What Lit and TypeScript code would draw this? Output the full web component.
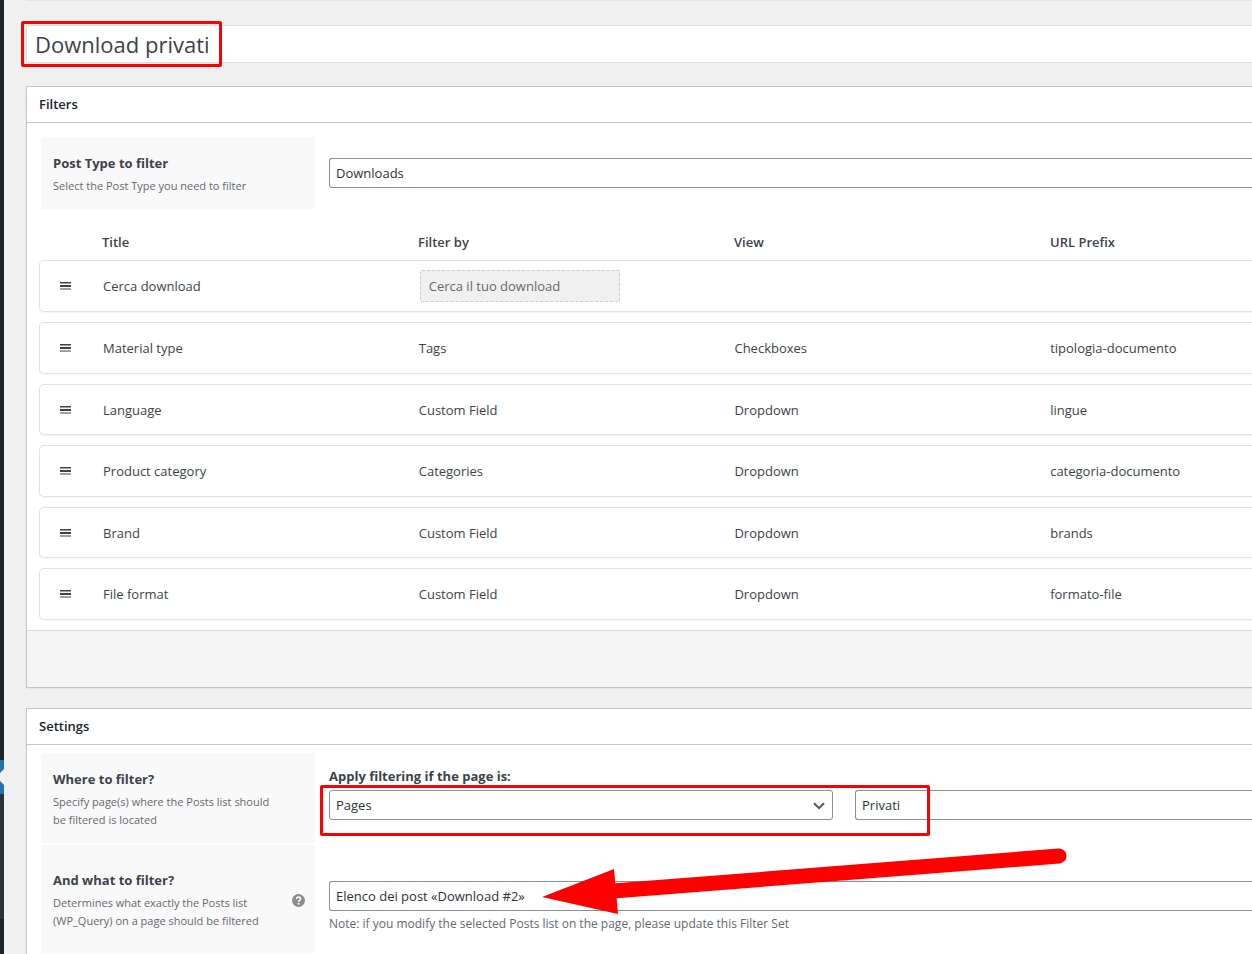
import { LitElement, html, svg, css, nothing } from "lit";
import { customElement, property } from "lit/decorators.js";

interface FilterRow {
  title: string;
  by: string;
  view: string;
  prefix: string;
  search?: boolean;
}

const FILTERS: FilterRow[] = [
  { title: "Cerca download", by: "Cerca il tuo download", view: "", prefix: "", search: true },
  { title: "Material type", by: "Tags", view: "Checkboxes", prefix: "tipologia-documento" },
  { title: "Language", by: "Custom Field", view: "Dropdown", prefix: "lingue" },
  { title: "Product category", by: "Categories", view: "Dropdown", prefix: "categoria-documento" },
  { title: "Brand", by: "Custom Field", view: "Dropdown", prefix: "brands" },
  { title: "File format", by: "Custom Field", view: "Dropdown", prefix: "formato-file" },
];

@customElement("filter-table")
export class FilterTable extends LitElement {
  static styles = css`
    :host { display: block; }
    table, thead, tbody { display: block; }
    tbody { display: flex; flex-direction: column; gap: 10px; }
    tr {
      display: grid;
      grid-template-columns: 63px 316fr 316fr 316fr 202fr;
      align-items: center;
      box-sizing: border-box;
    }
    th, td { padding: 0; text-align: left; line-height: 20px; }
    thead tr { padding: 23px 0 8px; }
    th { font-weight: 600; }
    tbody tr {
      height: 52px;
      border: 1px solid #e2e2e2;
      border-right: 0;
      border-radius: 5px 0 0 5px;
      box-shadow: 0 1px 1px rgba(0, 0, 0, 0.04);
    }
    tbody tr:nth-child(2n + 3) { height: 51px; }
    .handle {
      display: block;
      margin-left: 20px;
      padding: 0;
      border: 0;
      background: none;
      line-height: 0;
      cursor: move;
    }
    .search {
      box-sizing: border-box;
      display: block;
      width: 200px;
      height: 32px;
      padding: 0 8px;
      margin: 0 1px;
      border: 1px dashed #ccc;
      border-radius: 2px;
      background: #f0f0f0;
      color: #646970;
      font: inherit;
    }
  `;

  render() {
    return html`
      <table>
        <thead>
          <tr>
            <th></th>
            <th scope="col">Title</th>
            <th scope="col">Filter by</th>
            <th scope="col">View</th>
            <th scope="col">URL Prefix</th>
          </tr>
        </thead>
        <tbody>
          ${FILTERS.map(
            (f) => html`<tr>
              <td>
                <button class="handle" type="button" aria-label="Reorder">
                  <svg width="11" height="8" viewBox="0 0 11 8">
                    <path d="M0 0h11v1H0zM0 3h11v2H0zM0 6.5h11v1H0z" fill="#3c434a" />
                    <path d="M0 1h11v.5H0z" fill="#3c434a" />
                  </svg>
                </button>
              </td>
              <td>${f.title}</td>
              <td>
                ${f.search
                  ? html`<input class="search" aria-label="Search field text" readonly .value=${f.by} />`
                  : f.by}
              </td>
              <td>${f.view}</td>
              <td>${f.prefix}</td>
            </tr>`,
          )}
        </tbody>
      </table>
    `;
  }
}

@customElement("setting-row")
export class SettingRow extends LitElement {
  @property() heading = "";
  @property({ attribute: false }) lines: string[] = [];
  @property({ type: Boolean }) help = false;

  static styles = css`
    :host { display: grid; grid-template-columns: 274px 1fr; column-gap: 14px; margin-left: 2px; }
    .label {
      display: flex;
      align-items: center;
      justify-content: space-between;
      padding: 16px 10px 14px 12px;
      background: #f9f9f9;
    }
    .heading { margin: 0 0 4px; font-size: 13px; font-weight: 700; line-height: 20px; }
    .desc { margin: 0; font-size: 11px; line-height: 18px; color: #646970; white-space: nowrap; }
    .help { display: block; flex: none; }
    .mark { font: 700 11px "Open Sans", sans-serif; }
  `;

  render() {
    return html`
      <div class="label">
        <div>
          <h3 class="heading">${this.heading}</h3>
          <p class="desc">${this.lines.map((l, i) => html`${i ? html`<br />` : nothing}${l}`)}</p>
        </div>
        ${this.help
          ? html`<svg class="help" width="13" height="13" viewBox="0 0 13 13" role="img" aria-label="Help">
              <circle cx="6.5" cy="6.5" r="6.5" fill="#8c8c8c" />
              <path d="M4.6 5c0-2.6 3.9-2.5 3.9-.2 0 1.500-1.900 1.500-1.900 3" fill="none" stroke="#fff" stroke-width="1.600" />
              <rect x="5.700" y="8.900" width="1.800" height="1.700" fill="#fff" />
            </svg>`
          : nothing}
      </div>
      <slot></slot>
    `;
  }
}

@customElement("app-root")
export class AppRoot extends LitElement {
  static styles = css`
    :host {
      display: block;
      background: #f0f0f1;
      color: #3c434a;
      font: 13px/20px "Open Sans", "Noto Sans", sans-serif;
    }
    .page { display: flex; min-height: 100vh; overflow: hidden; }
    .menu { flex: none; width: 4px; background: #1d2327; overflow: hidden; }
    .menu-current {
      position: relative;
      height: 34px;
      margin-top: 760px;
      background: #2271b1;
    }
    .menu-notch {
      position: absolute;
      top: 9px;
      right: 0;
      border: 8px solid transparent;
      border-left: 0;
      border-right-color: #f0f0f1;
    }
    .menu-sub { height: 125px; background: #2c3338; }
    .main { flex: 1; min-width: 0; display: flex; flex-direction: column; padding-left: 22px; }
    .screen-meta { height: 1px; margin-bottom: 24px; background: #e4e4e6; }
    .title-wrap { position: relative; margin-bottom: 23px; }
    .title {
      display: block;
      box-sizing: border-box;
      width: 100%;
      height: 38px;
      padding: 0 8px;
      border: 1px solid #dcdcde;
      border-right: 0;
      background: #fff;
      color: #3c434a;
      font: inherit;
      font-size: 22px;
    }
    .mark {
      position: absolute;
      box-sizing: border-box;
      border: 3px solid #f00;
      border-radius: 2px;
      pointer-events: none;
    }
    .mark-title { left: -5px; top: -4px; width: 201px; bottom: -4px; }
    .mark-pages { left: -9px; right: 322px; top: -5px; bottom: -16px; }
    .panel {
      border: 1px solid #c3c4c7;
      border-right: 0;
      background: #fff;
      box-shadow: 0 1px 1px rgba(0, 0, 0, 0.04);
    }
    .panel + .panel { flex: 1; margin-top: 20px; border-bottom: 0; }
    .panel-title {
      margin: 0;
      padding: 7px 12px 8px;
      border-bottom: 1px solid #c3c4c7;
      color: #1d2327;
      font-size: 13px;
      font-weight: 600;
      line-height: 20px;
    }
    .filters { padding: 14px 0 10px 12px; }
    .settings { display: grid; gap: 2px; padding: 8px 0 0 12px; }
    .panel-foot { height: 56px; border-top: 1px solid #dcdcde; background: #f5f5f5; }
    .field { align-self: center; display: flex; flex-direction: column; }
    .field-top { align-self: start; padding-top: 13px; }
    .field-note { align-self: start; padding: 36px 0 20px; }
    .field-label { margin-bottom: 4px; font-weight: 700; }
    .pair { position: relative; display: grid; grid-template-columns: 504fr 397fr; column-gap: 22px; }
    .anchor { position: relative; }
    select {
      appearance: none;
      box-sizing: border-box;
      display: block;
      width: 100%;
      height: 30px;
      padding: 0 6px;
      border: 1px solid #8c8f94;
      border-radius: 3px;
      background: #fff;
      color: #2c3338;
      font: inherit;
    }
    .bleed { border-right: 0; border-radius: 3px 0 0 3px; }
    .chevron { position: absolute; right: 8px; top: 12px; pointer-events: none; }
    .arrow { position: absolute; left: 212px; top: -35px; pointer-events: none; }
    .note { margin: 4px 0 0; font-size: 12px; line-height: 18px; color: #646970; }
  `;

  private arrow() {
    return svg`
      <path d="M280 45 518 10" fill="none" />
      <path d="M518 10 72 45" fill="none" stroke="#f00" stroke-width="15" stroke-linecap="round" />
      <path d="M1 51 73 23 77 68z" fill="#f00" />
    `;
  }

  render() {
    return html`
      <div class="page">
        <div class="menu">
          <div class="menu-current"><span class="menu-notch"></span></div>
          <div class="menu-sub"></div>
        </div>
        <main class="main">
          <div class="screen-meta"></div>
          <div class="title-wrap">
            <input class="title" type="text" aria-label="Title" .value=${"Download privati"} />
            <span class="mark mark-title"></span>
          </div>

          <section class="panel">
            <h2 class="panel-title">Filters</h2>
            <div class="filters">
              <setting-row heading="Post Type to filter" .lines=${["Select the Post Type you need to filter"]}>
                <div class="field">
                  <select class="bleed" aria-label="Post Type to filter">
                    <option>Downloads</option>
                  </select>
                </div>
              </setting-row>
              <filter-table></filter-table>
            </div>
            <div class="panel-foot"></div>
          </section>

          <section class="panel">
            <h2 class="panel-title">Settings</h2>
            <div class="settings">
              <setting-row
                heading="Where to filter?"
                .lines=${["Specify page(s) where the Posts list should", "be filtered is located"]}
              >
                <div class="field field-top">
                  <label class="field-label" for="page-kind">Apply filtering if the page is:</label>
                  <div class="pair">
                    <div class="anchor">
                      <select id="page-kind">
                        <option>Pages</option>
                      </select>
                      <svg class="chevron" width="12" height="8" viewBox="0 0 12 8">
                        <path d="M1 1.200 6 6.200 11 1.200" fill="none" stroke="#50575e" stroke-width="2" />
                      </svg>
                    </div>
                    <select class="bleed" aria-label="Page">
                      <option>Privati</option>
                    </select>
                    <span class="mark mark-pages"></span>
                  </div>
                </div>
              </setting-row>
              <setting-row
                heading="And what to filter?"
                help
                .lines=${["Determines what exactly the Posts list", "(WP_Query) on a page should be filtered"]}
              >
                <div class="field field-note">
                  <div class="anchor">
                    <select class="bleed" aria-label="And what to filter?">
                      <option>Elenco dei post «Download #2»</option>
                    </select>
                    <svg class="arrow" width="526" height="70" viewBox="0 0 526 70">${this.arrow()}</svg>
                  </div>
                  <p class="note">
                    Note: if you modify the selected Posts list on the page, please update this Filter Set
                  </p>
                </div>
              </setting-row>
            </div>
          </section>
        </main>
      </div>
    `;
  }
}
